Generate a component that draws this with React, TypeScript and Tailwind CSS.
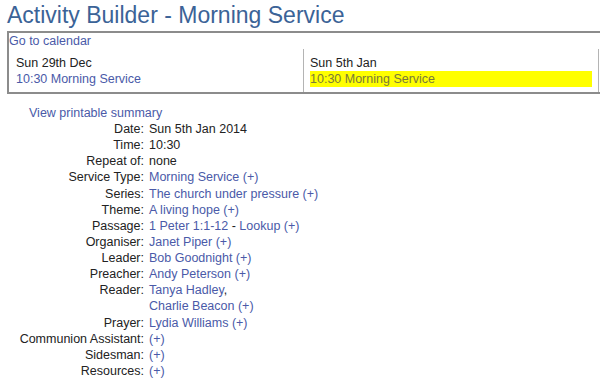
const link = "text-[#4a5aa8]"

type Row = { label: string; value: React.ReactNode }

const rows: Row[] = [
  { label: "Date:", value: "Sun 5th Jan 2014" },
  { label: "Time:", value: "10:30" },
  { label: "Repeat of:", value: "none" },
  { label: "Service Type:", value: <span className={link}>Morning Service (+)</span> },
  { label: "Series:", value: <span className={link}>The church under pressure (+)</span> },
  { label: "Theme:", value: <span className={link}>A living hope (+)</span> },
  {
    label: "Passage:",
    value: (
      <>
        <span className={link}>1 Peter 1:1-12</span> - <span className={link}>Lookup (+)</span>
      </>
    ),
  },
  { label: "Organiser:", value: <span className={link}>Janet Piper (+)</span> },
  { label: "Leader:", value: <span className={link}>Bob Goodnight (+)</span> },
  { label: "Preacher:", value: <span className={link}>Andy Peterson (+)</span> },
  {
    label: "Reader:",
    value: (
      <>
        <span className={link}>Tanya Hadley</span>,
        <br />
        <span className={link}>Charlie Beacon (+)</span>
      </>
    ),
  },
  { label: "Prayer:", value: <span className={link}>Lydia Williams (+)</span> },
  { label: "Communion Assistant:", value: <span className={link}>(+)</span> },
  { label: "Sidesman:", value: <span className={link}>(+)</span> },
  { label: "Resources:", value: <span className={link}>(+)</span> },
]

function App() {
  return (
    <div
      className="w-[600px] h-[380px] overflow-hidden bg-white text-[12.5px] leading-[16px] text-[#222]"
      style={{ fontFamily: '"Liberation Sans", Arial, sans-serif' }}
    >
      <h1 className="pt-[1px] pl-[7px] text-[23px] leading-[28px] text-[#3b6397]">
        Activity Builder - Morning Service
      </h1>
      <div className="mt-[2px] ml-[7px] w-[620px] border-2 border-[#8c8c8c]">
        <div className={link}>Go to calendar</div>
        <div className="flex">
          <div className="w-[295px] border-r border-[#b4b4b4] pl-[7px] pr-[6px] pt-[6px] pb-[5px]">
            <div>Sun 29th Dec</div>
            <div className={link}>10:30 Morning Service</div>
          </div>
          <div className="w-[295px] border-r border-[#b4b4b4] pl-[6px] pr-[6px] pt-[6px] pb-[5px]">
            <div>Sun 5th Jan</div>
            <div className="bg-[#ffff00] text-[#7a7a3a]">10:30 Morning Service</div>
          </div>
        </div>
      </div>
      <div className="mt-[11px] pl-[29px]">
        <span className={link}>View printable summary</span>
      </div>
      <div className="flex flex-col leading-[16.13px]">
        {rows.map((r) => (
          <div key={r.label} className="flex">
            <div className="w-[144px] shrink-0 text-right">{r.label}</div>
            <div className="ml-[5px]">{r.value}</div>
          </div>
        ))}
      </div>
    </div>
  )
}

export default App
